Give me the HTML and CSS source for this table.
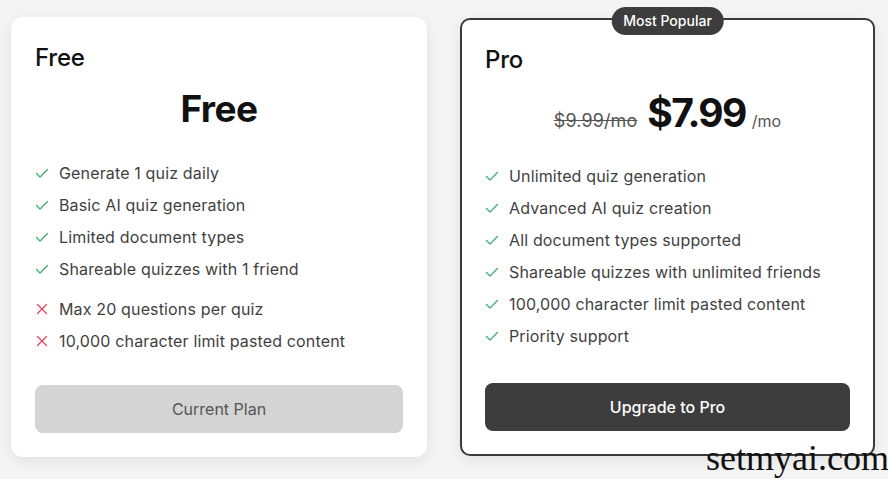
FILE: index.html
```html
<!DOCTYPE html>
<html>
<head>
<meta charset="utf-8">
<link rel="stylesheet" href="styles.css">
</head>
<body>
<div class="plans">
  <div class="card">
    <h2 class="plan-name">Free</h2>
    <div class="price-row"><span class="price">Free</span></div>
    <ul class="features">
      <li><svg class="ico ok" viewBox="0 0 14 14"><path d="M1.5 7.5l3.5 3.5 7.5-7.5"/></svg>Generate 1 quiz daily</li>
      <li><svg class="ico ok" viewBox="0 0 14 14"><path d="M1.5 7.5l3.5 3.5 7.5-7.5"/></svg>Basic AI quiz generation</li>
      <li><svg class="ico ok" viewBox="0 0 14 14"><path d="M1.5 7.5l3.5 3.5 7.5-7.5"/></svg>Limited document types</li>
      <li><svg class="ico ok" viewBox="0 0 14 14"><path d="M1.5 7.5l3.5 3.5 7.5-7.5"/></svg>Shareable quizzes with 1 friend</li>
    </ul>
    <ul class="features limits">
      <li><svg class="ico no" viewBox="0 0 14 14"><path d="M2.5 2.5l9 9M11.5 2.5l-9 9"/></svg>Max 20 questions per quiz</li>
      <li><svg class="ico no" viewBox="0 0 14 14"><path d="M2.5 2.5l9 9M11.5 2.5l-9 9"/></svg>10,000 character limit pasted content</li>
    </ul>
    <button class="btn btn-current">Current Plan</button>
  </div>
  <div class="card card-pro">
    <span class="badge">Most Popular</span>
    <h2 class="plan-name">Pro</h2>
    <div class="price-row"><span class="old">$9.99/mo</span><span class="price">$7.99</span><span class="per">/mo</span></div>
    <ul class="features">
      <li><svg class="ico ok" viewBox="0 0 14 14"><path d="M1.5 7.5l3.5 3.5 7.5-7.5"/></svg>Unlimited quiz generation</li>
      <li><svg class="ico ok" viewBox="0 0 14 14"><path d="M1.5 7.5l3.5 3.5 7.5-7.5"/></svg>Advanced AI quiz creation</li>
      <li><svg class="ico ok" viewBox="0 0 14 14"><path d="M1.5 7.5l3.5 3.5 7.5-7.5"/></svg>All document types supported</li>
      <li><svg class="ico ok" viewBox="0 0 14 14"><path d="M1.5 7.5l3.5 3.5 7.5-7.5"/></svg>Shareable quizzes with unlimited friends</li>
      <li><svg class="ico ok" viewBox="0 0 14 14"><path d="M1.5 7.5l3.5 3.5 7.5-7.5"/></svg>100,000 character limit pasted content</li>
      <li><svg class="ico ok" viewBox="0 0 14 14"><path d="M1.5 7.5l3.5 3.5 7.5-7.5"/></svg>Priority support</li>
    </ul>
    <button class="btn btn-upgrade">Upgrade to Pro</button>
  </div>
</div>
<div class="watermark">setmyai.com</div>
</body>
</html>
```

FILE: styles.css
```css
html, body {
  margin: 0;
  padding: 0;
  background: #f4f4f4;
  height: 100%;
  overflow: hidden;
}
body {
  font-family: Inter, "Noto Sans", sans-serif;
  color: #111;
  position: relative;
}
.plans {
  display: grid;
  grid-template-columns: 416px 415px;
  column-gap: 33px;
  padding: 17px 0 0 11px;
  align-items: start;
}
.card {
  background: #fff;
  border-radius: 12px;
  padding: 24px 24px 24px 24px;
  box-shadow: 0 4px 14px rgba(0,0,0,0.08);
  display: flex;
  flex-direction: column;
  position: relative;
  height: 440px;
  box-sizing: border-box;
}
.card-pro {
  border: 2px solid #3a3a3a;
  border-radius: 10px;
  margin-top: 1px;
  height: 438px;
  padding: 23px 23px 23px 23px;
}
.badge {
  position: absolute;
  top: -13px;
  left: 50%;
  transform: translateX(-50%);
  background: #3d3d3d;
  color: #fff;
  font-size: 14px;
  font-weight: 500;
  height: 28px;
  line-height: 28px;
  padding: 0 12px;
  border-radius: 14px;
  white-space: nowrap;
}
.plan-name {
  margin: 0;
  font-size: 24px;
  font-weight: 500;
  line-height: 34px;
  letter-spacing: -0.2px;
}
.price-row {
  display: flex;
  justify-content: center;
  align-items: baseline;
  margin-top: 10px;
  height: 48px;
  line-height: 48px;
}
.price {
  font-size: 37px;
  font-weight: 700;
  letter-spacing: -0.5px;
}
.card-pro .price {
  font-size: 39px;
  letter-spacing: -1.6px;
}
.old {
  font-size: 18px;
  color: #555;
  text-decoration: line-through;
  margin-right: 10px;
  letter-spacing: 0.1px;
}
.per {
  font-size: 16px;
  color: #555;
  margin-left: 6px;
}
.card-pro .price-row { margin-top: 12px; }
.features {
  list-style: none;
  margin: 24px 0 0 0;
  padding: 0;
}
.card-pro .features { margin-top: 23px; }
.features.limits { margin-top: 8px; }
.features li {
  display: flex;
  align-items: center;
  height: 32px;
  font-size: 16px;
  color: #3f3f3f;
  letter-spacing: 0.15px;
}
.ico {
  width: 14px;
  height: 14px;
  margin-right: 10px;
  fill: none;
  stroke-width: 1.3;
  stroke-linecap: round;
  stroke-linejoin: round;
  flex: none;
}
.ico.ok { stroke: #3fae72; }
.ico.no { stroke: #e0475c; }
.btn {
  margin-top: auto;
  height: 48px;
  border: none;
  border-radius: 8px;
  font-family: inherit;
  font-size: 16px;
}
.btn-current {
  background: #d4d4d4;
  color: #555;
}
.btn-upgrade {
  background: #3d3d3d;
  color: #fff;
  font-weight: 500;
}
.watermark {
  position: absolute;
  left: 706px;
  top: 440px;
  font-family: "Liberation Serif", serif;
  font-size: 36px;
  line-height: 1;
  color: #111;
}
```
